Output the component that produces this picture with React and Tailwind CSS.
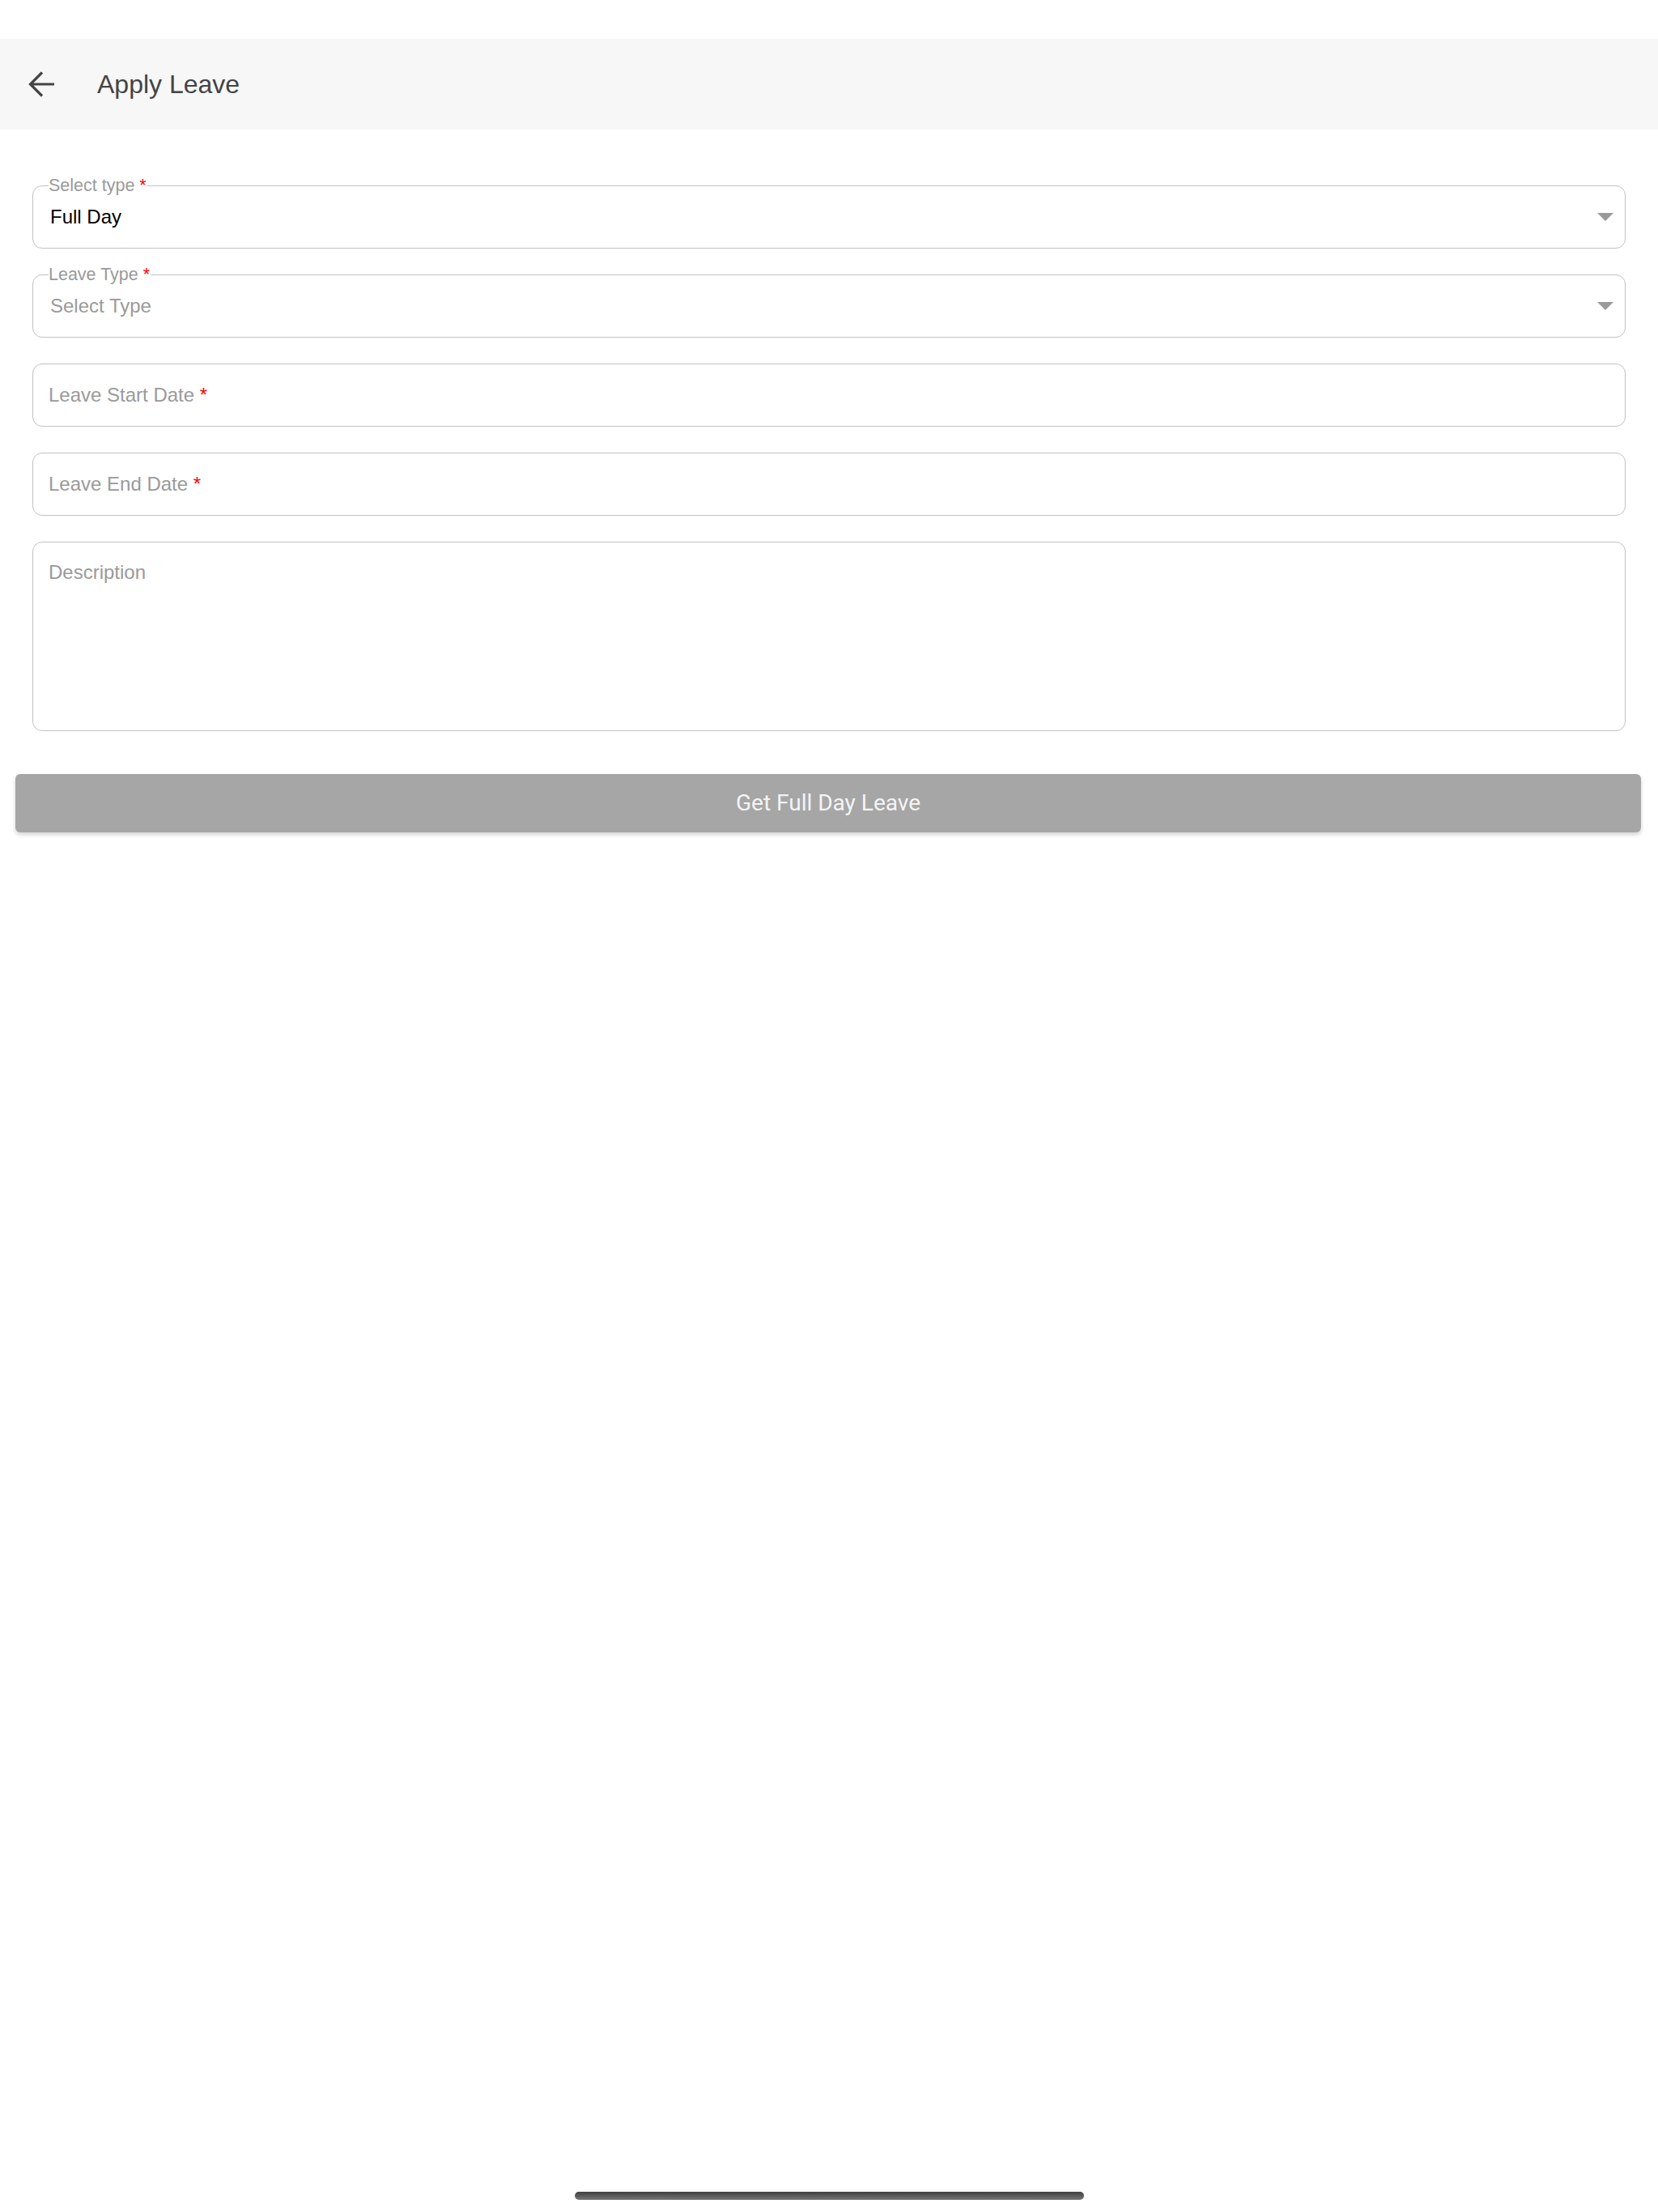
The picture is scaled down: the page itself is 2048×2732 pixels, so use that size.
import React, { useState } from 'react';

// Red required marker shown after labels
const Required = () => <span className="text-[#ff0000]">*</span>;

// Small filled caret used by the dropdowns
const Caret = () => (
  <svg width="20" height="10" viewBox="0 0 20 10" className="shrink-0">
    <path d="M0 0 H20 L10 10 Z" fill="#9a9a9a" />
  </svg>
);

// Outlined dropdown with the label sitting in the top border
const OutlinedSelect = ({ label, value, placeholder }) => (
  <div className="relative h-[78px] rounded-[12px] border-[1.5px] border-[#c2c2c2] flex items-center pl-[21px] pr-[14px]">
    <span className="absolute -top-[13px] left-[19px] bg-white text-[21.5px] leading-[24px] text-[#9a9a9a] pr-[1px]">
      {label} <Required />
    </span>
    <span className={`flex-1 text-[24px] ${value ? 'text-black' : 'text-[#9a9a9a]'}`}>
      {value || placeholder}
    </span>
    <Caret />
  </div>
);

// Outlined text input with the label as placeholder
const OutlinedInput = ({ label, required }) => (
  <div className="h-[78px] rounded-[12px] border-[1.5px] border-[#c2c2c2] flex items-center pl-[19px]">
    <span className="text-[24px] text-[#9a9a9a]">
      {label} {required && <Required />}
    </span>
  </div>
);

const App = () => {
  const [leaveMode] = useState('Full Day');

  return (
    <div className="min-h-[2732px] bg-white flex flex-col font-['Liberation_Sans',Arial,sans-serif]">
      {/* status bar spacer */}
      <div className="h-[48px]" />

      {/* Header */}
      <div className="h-[112px] bg-[#f7f7f7] flex items-center pl-[35px]">
        <svg width="32" height="32" viewBox="0 0 32 32" fill="none" stroke="#444" strokeWidth="3.2">
          <path d="M32 16 H2.5 M17 1.5 L2.5 16 L17 30.5" />
        </svg>
        <h1 className="ml-[53px] text-[32px] text-[#444]">Apply Leave</h1>
      </div>

      {/* Form */}
      <div className="mx-10 mt-[69px] flex flex-col gap-[32px]">
        <OutlinedSelect label="Select type" value={leaveMode} />
        <OutlinedSelect label="Leave Type" placeholder="Select Type" />
        <OutlinedInput label="Leave Start Date" required />
        <OutlinedInput label="Leave End Date" required />
        <div className="h-[234px] rounded-[12px] border-[1.5px] border-[#c2c2c2] pl-[19px] pt-[19px]">
          <span className="text-[24px] text-[#9a9a9a]">Description</span>
        </div>
      </div>

      <button className="mt-[53px] ml-[19px] mr-[21px] h-[72px] rounded-[6px] bg-[#a6a6a6] shadow-[0_3px_5px_rgba(0,0,0,0.18)] text-[28px] text-[#f4f4f4] font-['Roboto',sans-serif]">
        Get {leaveMode} Leave
      </button>

      {/* home indicator */}
      <div className="mt-auto mb-[15px] mx-auto w-[629px] h-[10px] rounded-full bg-gradient-to-b from-[#3f3f3f] to-[#777]" />
    </div>
  );
};

export default App;
